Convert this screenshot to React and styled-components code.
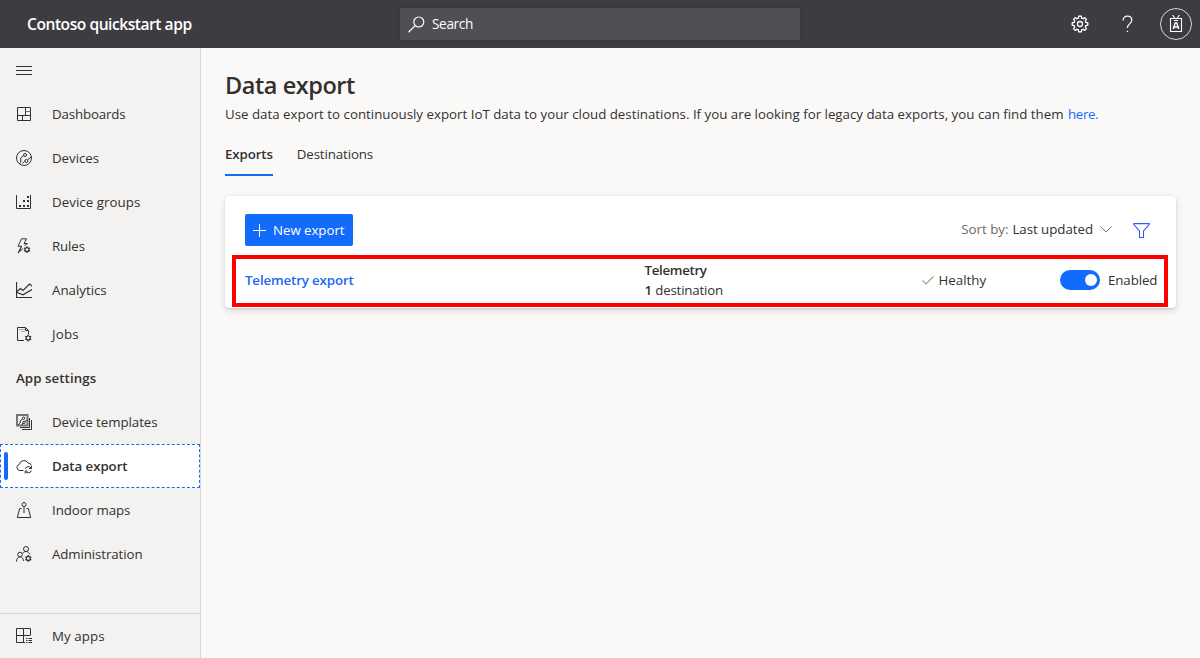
import React from "react";
import styled, { createGlobalStyle } from "styled-components";

const BLUE = "#136bfb";

const GlobalStyle = createGlobalStyle`
  *, *::before, *::after { box-sizing: border-box; }
  body {
    margin: 0;
    background: #faf9f8;
    color: #323130;
    font-family: "Open Sans", "Noto Sans", sans-serif;
    font-size: 13.3px;
    line-height: 20px;
  }
`;

const Shell = styled.div`
  display: flex;
  flex-direction: column;
  height: 658px;
  overflow: hidden;
`;

const Header = styled.header`
  display: grid;
  grid-template-columns: 400px 400px 1fr;
  align-items: center;
  flex: none;
  height: 48px;
  background: #3d3c41;
  color: #fff;
`;

const Brand = styled.div`
  padding-left: 27px;
  font-size: 15.6px;
  font-weight: 600;
  letter-spacing: -0.47px;
  white-space: nowrap;
`;

const SearchBox = styled.div`
  display: flex;
  align-items: center;
  gap: 7px;
  height: 32px;
  padding-left: 8px;
  border-radius: 2px;
  background: #504f54;
  box-shadow: 0 1px 4px rgba(0, 0, 0, 0.16);
  font-size: 13.6px;
  letter-spacing: -0.35px;
`;

const HeaderActions = styled.div`
  display: flex;
  align-items: center;
  justify-content: flex-end;
  padding-right: 8px;
`;

const HeaderButton = styled.div`
  display: grid;
  place-items: center;
  width: 48px;
  height: 48px;
`;

const Avatar = styled.div`
  display: grid;
  place-items: center;
  width: 32px;
  height: 32px;
  margin-left: 8px;
  border: 1px solid #d6d6d8;
  border-radius: 50%;
`;

const Body = styled.div`
  display: flex;
  flex: 1;
  min-height: 0;
`;

const Sidebar = styled.nav`
  display: flex;
  flex-direction: column;
  flex: none;
  width: 201px;
  border-right: 1px solid #d8d6d4;
  background: #f3f2f1;
`;

const NavItem = styled.div`
  display: flex;
  align-items: center;
  gap: 20px;
  height: 44px;
  padding-left: ${(p) => (p.$active ? 3 : 16)}px;
  border: ${(p) => (p.$active ? `1px dashed ${BLUE}` : "0")};
  background: ${(p) => (p.$active ? "#fff" : "transparent")};
  font-weight: ${(p) => (p.$active ? 600 : 400)};
  letter-spacing: ${(p) => p.$spacing || -0.05}px;
  white-space: nowrap;
`;

const ActiveBar = styled.span`
  width: 4px;
  height: 28px;
  margin-right: -12px;
  border-radius: 2px;
  background: ${BLUE};
`;

const NavHeading = styled.div`
  height: 44px;
  padding-left: 16px;
  font-weight: 600;
  line-height: 44px;
  letter-spacing: 0.06px;
`;

const NavFooter = styled.div`
  margin-top: auto;
  border-top: 1px solid #d8d6d4;
`;

const Main = styled.main`
  flex: 1;
  padding: 21px 24px 0;
`;

const Title = styled.h1`
  margin: 0;
  font-size: 23.5px;
  font-weight: 600;
  line-height: 33px;
  letter-spacing: -0.45px;
`;

const Description = styled.p`
  margin: 2px 0 0;
  letter-spacing: 0.004px;
  white-space: nowrap;
`;

const InlineLink = styled.a`
  margin-left: 1px;
  color: ${BLUE};
  letter-spacing: -0.38px;
`;

const Tabs = styled.div`
  display: flex;
  gap: 24px;
  margin-top: 8px;
`;

const Tab = styled.div`
  height: 44px;
  line-height: 44px;
  letter-spacing: -0.12px;
  font-weight: ${(p) => (p.$active ? 600 : 400)};
  box-shadow: ${(p) => (p.$active ? `inset 0 -2px ${BLUE}` : "none")};
`;

const Card = styled.section`
  width: 951px;
  height: 112px;
  margin-top: 20px;
  padding: 18px 8px 0 7px;
  border-radius: 4px;
  background: #fff;
  box-shadow: 0 3px 7px rgba(0, 0, 0, 0.13), 0 0.6px 1.8px rgba(0, 0, 0, 0.11);
`;

const Toolbar = styled.div`
  display: flex;
  align-items: center;
  height: 32px;
  padding: 0 18px 0 13px;
`;

const PrimaryButton = styled.div`
  display: flex;
  align-items: center;
  gap: 7px;
  width: 108px;
  height: 32px;
  padding-left: 8px;
  border-radius: 2px;
  background: ${BLUE};
  color: #fff;
  letter-spacing: -0.05px;
  white-space: nowrap;
`;

const SortControl = styled.div`
  display: flex;
  align-items: center;
  margin: -2px 21px 0 auto;
`;

const SortLabel = styled.span`
  margin-right: 4px;
  color: #6b6967;
`;

const SortValue = styled.span`
  margin-right: 7px;
  letter-spacing: -0.04px;
`;

const ExportRow = styled.div`
  display: grid;
  grid-template-columns: 399.500px 277px 138.500px 1fr;
  align-items: center;
  height: 52px;
  margin-top: 9px;
  padding: 0 0 2px 9px;
  border: 4px solid #fe0000;
  white-space: nowrap;
`;

const ExportName = styled.div`
  color: #2068f0;
  font-weight: 600;
  letter-spacing: -0.14px;
`;

const ExportType = styled.div`
  font-weight: 600;
  letter-spacing: -0.32px;
`;

const ExportTarget = styled.div`
  letter-spacing: -0.18px;
`;

const Count = styled.span`
  font-weight: 600;
`;

const Status = styled.div`
  display: flex;
  align-items: center;
  gap: 5px;
`;

const ToggleField = styled.div`
  display: flex;
  align-items: center;
  gap: 8px;
  letter-spacing: -0.1px;
`;

const Toggle = styled.span`
  display: flex;
  align-items: center;
  justify-content: flex-end;
  width: 40px;
  height: 20px;
  padding-right: 3px;
  border-radius: 10px;
  background: ${BLUE};
`;

const Knob = styled.span`
  width: 12px;
  height: 12px;
  border-radius: 50%;
  background: #fff;
`;

const Svg = styled.svg`
  display: block;
  flex: none;
  fill: none;
  stroke: ${(p) => p.$color || "#323130"};
  stroke-width: ${(p) => p.$stroke || 1};
`;

function Icon({ w = 16, h = 16, color, stroke, children }) {
  return (
    <Svg width={w} height={h} viewBox={`0 0 ${w} ${h}`} $color={color} $stroke={stroke} aria-hidden="true">
      {children}
    </Svg>
  );
}

/* Toothed gear outline centred on (cx, cy). */
function gearPath(cx, cy, outer, inner, teeth) {
  const step = (Math.PI * 2) / teeth;
  const points = [];
  for (let i = 0; i < teeth; i += 1) {
    const a = i * step - Math.PI / 2;
    [[-0.34, inner], [-0.2, outer], [0.2, outer], [0.34, inner]].forEach(([k, r]) => {
      points.push(`${(cx + r * Math.cos(a + k * step)).toFixed(2)} ${(cy + r * Math.sin(a + k * step)).toFixed(2)}`);
    });
  }
  return `M${points.join("L")}Z`;
}

const SmallGear = ({ cx, cy }) => (
  <>
    <circle cx={cx} cy={cy} r="2" strokeWidth="1.2" />
    <path d={`M${cx} ${cy - 3.4}v1.400M${cx} ${cy + 2}v1.400M${cx - 3} ${cy - 1.7}l1.200 .7M${cx + 1.8} ${cy + 1}l1.200 .7M${cx + 3} ${cy - 1.7}l-1.200 .7M${cx - 1.8} ${cy + 1}l-1.200 .7`} strokeWidth="1.2" />
  </>
);

const icons = {
  menu: <path d="M0 4.500h16M0 8.500h16M0 12.500h16" />,
  dashboards: (
    <>
      <path d="M1.5 1.5h13v13h-13zM9.5 1.5v8M1.5 9.5h13M6.5 9.5v5" />
      <path d="M9.5 5.5h5" stroke="#777573" />
    </>
  ),
  devices: (
    <>
      <circle cx="8" cy="8" r="7.5" />
      <circle cx="9" cy="5" r="1.5" />
      <circle cx="10.3" cy="11" r="1.5" />
      <path d="M7.6 5.6L4.800 7.800v4.700L3 14M11.500 10l3.500-3M8.700 11.200L6.500 13.500" />
    </>
  ),
  groups: (
    <>
      <path d="M.5 1v13.5h14V1" />
      <path d="M3 11h2v2H3zM7 11h2v2H7zM11 11h2v2h-2zM7 6h2v2H7zM11 6h2v2h-2zM11 2h2v2h-2z" fill="#323130" stroke="none" />
    </>
  ),
  rules: (
    <>
      <path d="M5.500 .8h5L8 5.500h3.500M5.500 .8L2 8.200h3.500L2 15l5-4.500" />
      <path d="M5.500 8.200L3.500 13M8.500 7.500L11.500 5.500" />
      <SmallGear cx={11} cy={11.6} />
    </>
  ),
  analytics: (
    <>
      <path d="M.5 0v15.5H16" strokeWidth="1.2" />
      <path d="M1 9.500l3.500-3L7 8.500 13.500 2l2.500 2M1 10.500l6 2.300 9-5.300" strokeWidth="1.2" />
    </>
  ),
  jobs: (
    <>
      <path d="M8 14.500H1.500v-13h8l3 3V8M9.500 1.500v3h3" />
      <path d="M3.500 3.500h1M5.500 3.500h1M7.500 3.500h1M5.500 5.500h1M7.500 5.500h1" stroke="#666" />
      <SmallGear cx={12.2} cy={12} />
    </>
  ),
  templates: (
    <>
      <path d="M1 1h10.500v10.500H1z" stroke="#777573" strokeWidth="2" />
      <circle cx="7.600" cy="4.200" r="1.200" />
      <circle cx="8" cy="8.400" r="1.200" />
      <path d="M6.500 5L4.200 6.800V9L2 11M9 7.500l2.500-1.800M7 9l-1.200 2" />
      <path d="M4 13.500h9.500V4M6 15.500h9.500V6" />
    </>
  ),
  exportCloud: (
    <>
      <path d="M7.500 12.500H3.600a3.100 3.100 0 0 1-.2-6.100A4.600 4.600 0 0 1 12 5a3.300 3.300 0 0 1 3.300 2.500" />
      <path d="M9.200 10.800a3.300 3.300 0 0 1 5.800-.8M15.500 8v2.500H13M15.400 12.600a3.300 3.300 0 0 1-5.800.9M9.200 15.500V13h2.500" />
    </>
  ),
  maps: (
    <>
      <circle cx="8" cy="2.500" r="2" />
      <path d="M8 4.500v6.500M5.500 6.500H3.700L1.300 15.500h13.400l-2.400-9h-1.800" />
    </>
  ),
  admin: (
    <>
      <circle cx="10" cy="3" r="2.500" />
      <circle cx="4" cy="8.500" r="2.300" />
      <path d="M.5 15.500c0-2.800 1.500-4.700 3.500-4.700S7.300 12.500 7.700 15M6.600 7.500C7.200 6.300 8.400 5.500 10 5.500s3.300 1 3.900 2.900" />
      <SmallGear cx={12.3} cy={12.4} />
    </>
  ),
  apps: (
    <path d="M9 14.500H.5V.5h14V7M.5 7.500h14M7.500 .5v14M10 10.500h1.500M12.500 10.500H16M10 12.500h1.500M12.500 12.500H16M10 14.500h1.500M12.500 14.500H16" />
  ),
};

const NAV = [
  ["Dashboards", "dashboards", -0.15],
  ["Devices", "devices", -0.04],
  ["Device groups", "groups", 0.05],
  ["Rules", "rules", -0.12],
  ["Analytics", "analytics", -0.01],
  ["Jobs", "jobs", 0.2],
];

const SETTINGS = [
  ["Device templates", "templates", -0.05],
  ["Data export", "exportCloud", -0.07],
  ["Indoor maps", "maps", -0.07],
  ["Administration", "admin", -0.1],
];

function NavEntry({ label, icon, spacing, active }) {
  return (
    <NavItem $active={active} $spacing={spacing}>
      {active && <ActiveBar />}
      <Icon>{icons[icon]}</Icon>
      {label}
    </NavItem>
  );
}

export default function App() {
  return (
    <Shell>
      <GlobalStyle />
      <Header>
        <Brand>Contoso quickstart app</Brand>
        <SearchBox>
          <Icon w={17} h={17} color="#fff" stroke={1.2}>
            <circle cx="10.800" cy="6" r="5" />
            <path d="M7.200 9.600L.5 16.200" />
          </Icon>
          Search
        </SearchBox>
        <HeaderActions>
          <HeaderButton>
            <Icon w={18} h={18} color="#fff" stroke={1.3}>
              <path d={gearPath(9, 9, 7.9, 6.1, 8)} />
              <circle cx="9" cy="9" r="2.500" />
            </Icon>
          </HeaderButton>
          <HeaderButton>
            <Icon w={12} h={18} color="#fff" stroke={1.2}>
              <path d="M1 5.600C1 2.800 2.800 1.200 5.400 1.200s4.400 1.600 4.400 4C9.800 8.600 5.400 8.800 5.400 13" />
              <path d="M4.700 16.400h1.400" />
            </Icon>
          </HeaderButton>
          <Avatar>
            <Icon w={14} h={18} color="#fff" stroke={1.1}>
              <path d="M1.500 3.500h11v13h-11zM3.600 0L6 3.500M10.400 0L8 3.500M5 5.500h4" />
              <path d="M4.200 14L6.200 8h1.600l2 6M5 12h4" strokeWidth="1.4" />
            </Icon>
          </Avatar>
        </HeaderActions>
      </Header>
      <Body>
        <Sidebar>
          <NavItem>
            <Icon>{icons.menu}</Icon>
          </NavItem>
          {NAV.map(([label, icon, spacing]) => (
            <NavEntry key={label} label={label} icon={icon} spacing={spacing} />
          ))}
          <NavHeading>App settings</NavHeading>
          {SETTINGS.map(([label, icon, spacing]) => (
            <NavEntry key={label} label={label} icon={icon} spacing={spacing} active={label === "Data export"} />
          ))}
          <NavFooter>
            <NavEntry label="My apps" icon="apps" spacing={0.1} />
          </NavFooter>
        </Sidebar>
        <Main>
          <Title>Data export</Title>
          <Description>
            Use data export to continuously export IoT data to your cloud destinations. If you are looking for legacy
            data exports, you can find them <InlineLink>here.</InlineLink>
          </Description>
          <Tabs>
            <Tab $active>Exports</Tab>
            <Tab>Destinations</Tab>
          </Tabs>
          <Card>
            <Toolbar>
              <PrimaryButton>
                <Icon w={13} h={13} color="#fff">
                  <path d="M6.500 0v13M0 6.500h13" />
                </Icon>
                New export
              </PrimaryButton>
              <SortControl>
                <SortLabel>Sort by:</SortLabel>
                <SortValue>Last updated</SortValue>
                <Icon w={12} h={8} color="#7a7876">
                  <path d="M.5 1.500L6 7l5.500-5.500" />
                </Icon>
              </SortControl>
              <Icon w={17} h={15} color="#2c5df0" stroke={1.1}>
                <path d="M.8 .6h15.400v1L10.500 8v6.500h-4V8L.8 1.600z" />
              </Icon>
            </Toolbar>
            <ExportRow>
              <ExportName>Telemetry export</ExportName>
              <div>
                <ExportType>Telemetry</ExportType>
                <ExportTarget>
                  <Count>1</Count> destination
                </ExportTarget>
              </div>
              <Status>
                <Icon w={12} h={9} color="#8bb174" stroke={1.2}>
                  <path d="M.5 4.500L4 8l7.500-7.500" />
                </Icon>
                Healthy
              </Status>
              <ToggleField>
                <Toggle>
                  <Knob />
                </Toggle>
                Enabled
              </ToggleField>
            </ExportRow>
          </Card>
        </Main>
      </Body>
    </Shell>
  );
}
